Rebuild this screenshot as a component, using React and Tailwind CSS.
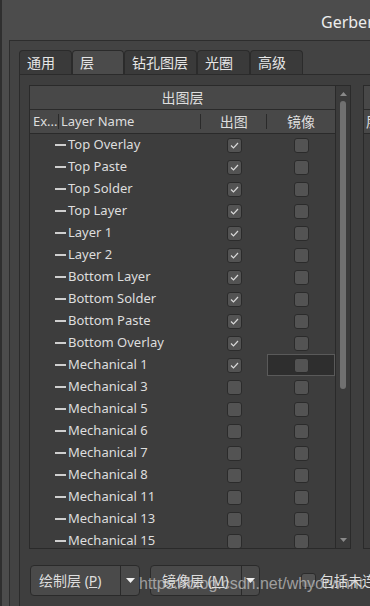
const layers = [
    'Top Overlay', 'Top Paste', 'Top Solder', 'Top Layer', 'Layer 1', 'Layer 2',
    'Bottom Layer', 'Bottom Solder', 'Bottom Paste', 'Bottom Overlay', 'Mechanical 1',
    'Mechanical 3', 'Mechanical 5', 'Mechanical 6', 'Mechanical 7', 'Mechanical 8',
    'Mechanical 11', 'Mechanical 13', 'Mechanical 15'
];

const tabs = [
    { label: '通用', w: 'w-[53px]' },
    { label: '层', w: 'w-[52px]', active: true },
    { label: '钻孔图层', w: 'w-[73px]' },
    { label: '光圈', w: 'w-[53px]' },
    { label: '高级', w: 'w-[53px]' }
];

const Check = ({ checked }) => (
    <div className="w-[15px] h-[15px] rounded-[3px] bg-[#535353] border border-[#2b2b2b] flex items-center justify-center">
        {checked && (
            <svg width="9" height="7" viewBox="0 0 9 7">
                <polyline points="1,3.5 3.5,6 8,1" fill="none" stroke="#d8d8d8" strokeWidth="1.2" />
            </svg>
        )}
    </div>
);

const Caret = () => (
    <svg width="9" height="5" viewBox="0 0 9 5">
        <polygon points="0,0 9,0 4.5,5" fill="#f0f0f0" />
    </svg>
);

const App = () => {
    return (
        <div
            className="relative w-[370px] h-[606px] overflow-hidden bg-[#4c4c4c] border-l-2 border-[#2f2f2f] flex flex-col text-[#dedede]"
            style={{ fontFamily: '"Noto Sans", "Noto Sans CJK SC", sans-serif' }}
        >
            {/* title */}
            <div className="h-[40px] shrink-0 flex items-center pl-[319px] pt-[3px]">
                <span className="text-[16px] whitespace-nowrap text-[#ececec]">Gerber Setup</span>
            </div>

            {/* dialog body */}
            <div className="flex-1 ml-[7px] border-l border-t border-[#2d2d2d] bg-[#434343] pl-[9px] pt-[9px] flex flex-col min-h-0">
                {/* tabs */}
                <div className="h-[24px] shrink-0 flex">
                    {tabs.map(t => (
                        <div
                            key={t.label}
                            className={`${t.w} shrink-0 h-[24px] rounded-t-[4px] border border-b-0 border-[#2b2b2b] pl-[7px] flex items-center text-[14px] whitespace-nowrap text-[#e6e6e6] ${t.active ? 'bg-[#4b4b4b]' : 'bg-[#3a3a3a]'}`}
                        >
                            {t.label}
                        </div>
                    ))}
                </div>

                {/* tab content */}
                <div className="flex-1 border-l border-t border-[#2b2b2b] bg-[#3e3e3e] pl-[9px] pt-[10px] flex flex-col">
                    <div className="flex gap-[12px] shrink-0">
                        {/* layer table */}
                        <div className="w-[322px] h-[464px] shrink-0 border border-[#2a2a2a] flex">
                            <div className="w-[306px] flex flex-col overflow-hidden bg-[#3d3d3d] border-r border-[#2a2a2a]">
                                <div className="h-[24px] shrink-0 bg-[#484848] border-b border-[#2a2a2a] flex items-center justify-center text-[14px]">
                                    出图层
                                </div>
                                <div className="h-[24px] shrink-0 bg-[#484848] border-b border-[#2a2a2a] flex items-center text-[13px]">
                                    <div className="w-[29px] pl-[3px] border-r border-[#2a2a2a] h-[15px] flex items-center">Ex...</div>
                                    <div className="w-[143px] pl-[2px] border-r border-[#2a2a2a] h-[15px] flex items-center">Layer Name</div>
                                    <div className="w-[66px] border-r border-[#2a2a2a] h-[15px] flex items-center justify-center text-[14px]">出图</div>
                                    <div className="w-[68px] flex items-center justify-center text-[14px]">镜像</div>
                                </div>
                                {layers.map((name, i) => (
                                    <div key={name} className="h-[22px] shrink-0 flex items-center text-[13px]">
                                        <div className="w-[172px] flex items-center">
                                            <span className="ml-[25px] w-[11px] h-[2px] bg-[#cfcfcf]" />
                                            <span className="ml-[2px] whitespace-nowrap">{name}</span>
                                        </div>
                                        <div className="w-[66px] flex justify-center">
                                            <Check checked={i <= 10} />
                                        </div>
                                        <div className={`w-[68px] h-[22px] flex items-center justify-center ${name === 'Mechanical 1' ? 'bg-[#2e2e2e] border border-[#5a5a5a]' : ''}`}>
                                            <Check />
                                        </div>
                                    </div>
                                ))}
                            </div>
                            {/* scrollbar */}
                            <div className="w-[14px] bg-[#3b3b3b] flex flex-col items-center pt-[6px]">
                                <svg width="7" height="4" viewBox="0 0 7 4">
                                    <polygon points="3.5,0 7,4 0,4" fill="#8a8a8a" />
                                </svg>
                                <div className="mt-[5px] w-[6px] h-[288px] rounded-[3px] bg-[#707070]" />
                                <div className="flex-1" />
                                <svg width="7" height="4" viewBox="0 0 7 4" className="mb-[6px]">
                                    <polygon points="0,0 7,0 3.5,4" fill="#8a8a8a" />
                                </svg>
                            </div>
                        </div>

                        {/* next table, cut off */}
                        <div className="w-[120px] h-[464px] shrink-0 border border-[#2a2a2a] bg-[#3d3d3d] flex flex-col">
                            <div className="h-[24px] bg-[#484848] border-b border-[#2a2a2a]" />
                            <div className="h-[24px] bg-[#484848] border-b border-[#2a2a2a] flex items-center pl-[2px] text-[14px]">层</div>
                        </div>
                    </div>

                    {/* buttons */}
                    <div className="mt-[16px] pl-[1px] flex items-center gap-[10px] shrink-0">
                        <div className="w-[110px] h-[31px] shrink-0 rounded-[4px] bg-[#4a4a4a] border border-[#2a2a2a] flex items-center">
                            <div className="w-[90px] h-full border-r border-[#2a2a2a] flex items-center pl-[8px] text-[14px] whitespace-nowrap">
                                绘制层 (<span className="underline">P</span>)
                            </div>
                            <div className="flex-1 flex justify-center"><Caret /></div>
                        </div>
                        <div className="w-[110px] h-[31px] shrink-0 rounded-[4px] bg-[#4a4a4a] border border-[#2a2a2a] flex items-center">
                            <div className="w-[91px] h-full border-r border-[#2a2a2a] flex items-center pl-[11px] text-[14px] whitespace-nowrap">
                                镜像层 (<span className="underline">M</span>)
                            </div>
                            <div className="flex-1 flex justify-center"><Caret /></div>
                        </div>
                        <div className="ml-[31px] shrink-0 flex items-center gap-[4px] whitespace-nowrap">
                            <div className="w-[15px] h-[15px] rounded-[3px] bg-[#535353] border border-[#2b2b2b]" />
                            <span className="text-[14px]">包括未连接的中间层焊盘</span>
                        </div>
                    </div>
                </div>
            </div>

            {/* watermark */}
            <div
                className="absolute left-[137px] top-[572px] text-[16px] text-[#e0e0e0]/60 whitespace-nowrap pointer-events-none"
                style={{ fontFamily: '"Liberation Sans", sans-serif' }}
            >
                https://blog.csdn.net/whyorwhnt
            </div>
        </div>
    );
};

export default App;
